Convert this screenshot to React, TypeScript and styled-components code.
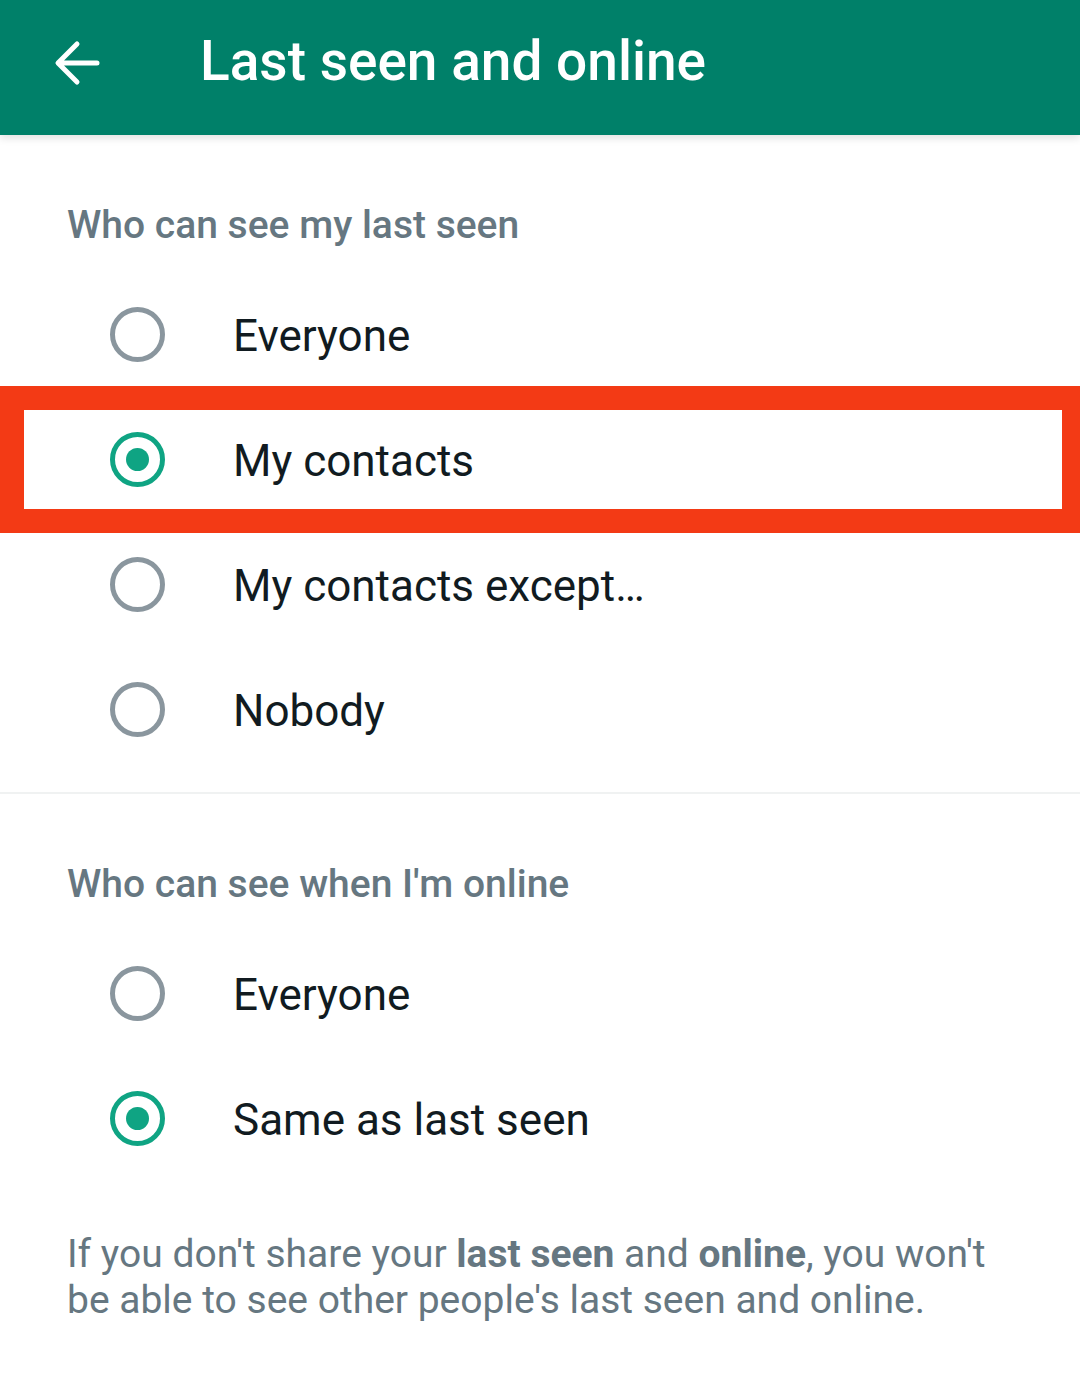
import React from "react";
import styled, { createGlobalStyle } from "styled-components";

const Global = createGlobalStyle`
  html, body { margin: 0; padding: 0; background: #ffffff; }
  body { font-family: Roboto, "Noto Sans", "Liberation Sans", sans-serif; }
`;

const Page = styled.div`
  width: 1080px;
  min-height: 1395px;
  background: #ffffff;
  display: flex;
  flex-direction: column;
`;

const TopBar = styled.header`
  height: 135px;
  background: #008069;
  display: flex;
  align-items: center;
  box-shadow: 0 3px 8px rgba(0, 0, 0, 0.12);
  position: relative;
  z-index: 1;
`;

const BackButton = styled.div`
  width: 200px;
  height: 135px;
  display: flex;
  align-items: center;
  padding-left: 53px;
  box-sizing: border-box;
  margin-top: -10px;
`;

const Title = styled.h1`
  margin: 0;
  margin-top: -14px;
  color: #ffffff;
  font-family: Roboto, sans-serif;
  font-weight: 500;
  font-size: 55px;
  letter-spacing: 0px;
`;

const Section = styled.section<{ $divider?: boolean }>`
  padding-top: 65px;
  padding-bottom: ${(p) => (p.$divider ? "20px" : "0")};
  border-bottom: ${(p) => (p.$divider ? "2px solid #f0f2f2" : "none")};
`;

const SectionTitle = styled.h2`
  margin: 0 0 22px 67px;
  height: 50px;
  line-height: 50px;
  color: #667781;
  font-family: Roboto, sans-serif;
  font-weight: 500;
  font-size: 39px;
`;

const Row = styled.div<{ $highlight?: boolean }>`
  position: relative;
  height: 125px;
  display: flex;
  align-items: center;
  padding-left: 110px;

  ${(p) =>
    p.$highlight &&
    `
    &::after {
      content: "";
      position: absolute;
      top: -11px;
      bottom: -11px;
      left: 0;
      right: 0;
      border: 24px solid #f33a15;
      border-right-width: 18px;
      pointer-events: none;
    }
  `}
`;

const Radio = styled.span<{ $checked?: boolean }>`
  width: 55px;
  height: 55px;
  box-sizing: border-box;
  border-radius: 50%;
  border: 5px solid ${(p) => (p.$checked ? "#0fa483" : "#8a969e")};
  display: flex;
  align-items: center;
  justify-content: center;
  flex-shrink: 0;

  &::before {
    content: "";
    width: 23px;
    height: 23px;
    border-radius: 50%;
    background: ${(p) => (p.$checked ? "#0fa483" : "transparent")};
  }
`;

const Label = styled.span`
  margin-left: 68px;
  color: #111b21;
  font-family: Roboto, sans-serif;
  font-size: 44px;
  font-weight: 400;
  margin-top: 2px;
`;

const Note = styled.p`
  margin: 50px 75px 0 67px;
  color: #667781;
  font-family: Roboto, sans-serif;
  font-size: 39px;
  line-height: 46px;

  b {
    font-weight: 700;
  }
`;

const BackArrow = () => (
  <svg width="48" height="48" viewBox="0 0 48 48" fill="none">
    <path
      d="M44 24H6M24 5L5 24l19 19"
      stroke="#ffffff"
      strokeWidth="5"
      strokeLinecap="round"
      strokeLinejoin="round"
    />
  </svg>
);

type Opt = { label: string; checked?: boolean; highlight?: boolean };

const lastSeen: Opt[] = [
  { label: "Everyone" },
  { label: "My contacts", checked: true, highlight: true },
  { label: "My contacts except…" },
  { label: "Nobody" },
];

const online: Opt[] = [
  { label: "Everyone" },
  { label: "Same as last seen", checked: true },
];

const Options = ({ items }: { items: Opt[] }) => (
  <>
    {items.map((o) => (
      <Row key={o.label} $highlight={o.highlight}>
        <Radio $checked={o.checked} />
        <Label>{o.label}</Label>
      </Row>
    ))}
  </>
);

export default function App() {
  return (
    <Page>
      <Global />
      <TopBar>
        <BackButton>
          <BackArrow />
        </BackButton>
        <Title>Last seen and online</Title>
      </TopBar>
      <Section $divider>
        <SectionTitle>Who can see my last seen</SectionTitle>
        <Options items={lastSeen} />
      </Section>
      <Section>
        <SectionTitle>Who can see when I'm online</SectionTitle>
        <Options items={online} />
        <Note>
          If you don't share your <b>last seen</b> and <b>online</b>, you won't
          be able to see other people's last seen and online.
        </Note>
      </Section>
    </Page>
  );
}
